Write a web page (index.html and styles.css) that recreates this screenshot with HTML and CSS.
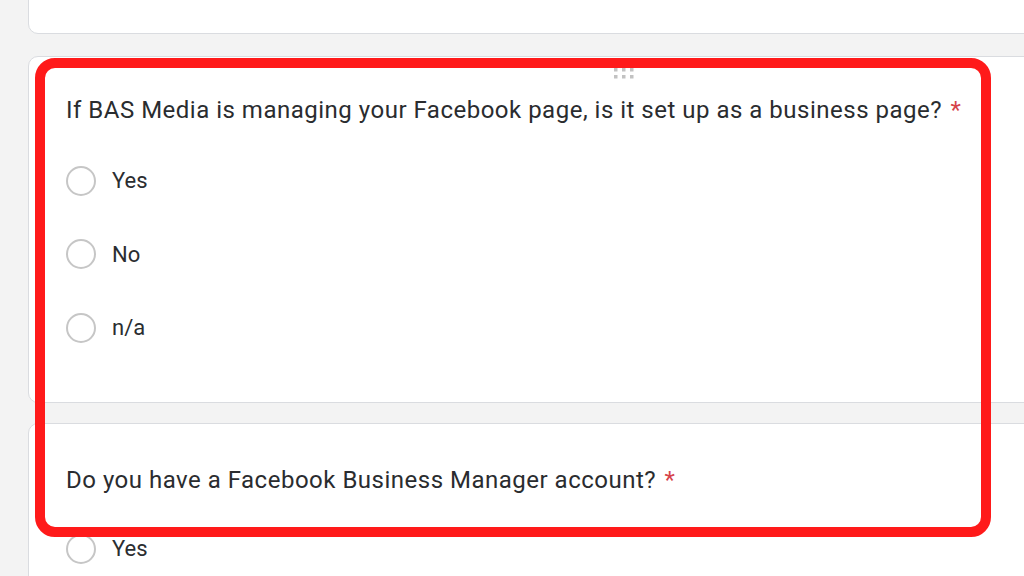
FILE: index.html
```html
<!DOCTYPE html>
<html>
<head>
<meta charset="utf-8">
<link rel="stylesheet" href="styles.css">
</head>
<body>
<div class="page">
  <div class="card card-top"></div>
  <div class="card card-q">
    <div class="drag">
      <svg width="24" height="12" viewBox="0 0 24 12"><g fill="#c2c2c2"><rect x="1" y="1" width="3.5" height="3.5"/><rect x="9" y="1" width="3.5" height="3.5"/><rect x="17" y="1" width="3.5" height="3.5"/><rect x="1" y="8" width="3.5" height="3.5"/><rect x="9" y="8" width="3.5" height="3.5"/><rect x="17" y="8" width="3.5" height="3.5"/></g></svg>
    </div>
    <div class="question">If BAS Media is managing your Facebook page, is it set up as a business page? <span class="req">*</span></div>
    <div class="options">
      <div class="option"><span class="radio"></span><span class="label">Yes</span></div>
      <div class="option"><span class="radio"></span><span class="label">No</span></div>
      <div class="option"><span class="radio"></span><span class="label">n/a</span></div>
    </div>
  </div>
  <div class="card card-q2">
    <div class="question">Do you have a Facebook Business Manager account? <span class="req">*</span></div>
    <div class="options">
      <div class="option"><span class="radio"></span><span class="label">Yes</span></div>
    </div>
  </div>
</div>
<div class="highlight"></div>
</body>
</html>
```
FILE: styles.css
```css
html, body {
  margin: 0;
  padding: 0;
  height: 100%;
  overflow: hidden;
}
body {
  background: #f3f3f3;
  font-family: Roboto, "Liberation Sans", Arial, sans-serif;
  color: #202124;
  position: relative;
}
.page {
  display: flex;
  flex-direction: column;
  margin-top: -100px;
  padding-left: 28px;
  width: 1200px;
}
.card {
  background: #fff;
  border: 1px solid #dadce0;
  border-radius: 10px;
  box-sizing: border-box;
  flex: none;
}
.card-top {
  height: 134px;
}
.card-q {
  margin-top: 22px;
  height: 347px;
  padding: 0 0 0 37px;
  display: flex;
  flex-direction: column;
}
.drag {
  padding: 10px 0 0 547px;
  height: 37px;
  box-sizing: border-box;
}
.drag svg {
  display: block;
}
.question {
  font-size: 24px;
  line-height: 32px;
  letter-spacing: 0.5px;
  color: #2a2c2f;
}
.req {
  color: #d6434a;
  margin-left: 2px;
}
.options {
  display: flex;
  flex-direction: column;
  margin-top: 18px;
}
.option {
  display: flex;
  align-items: center;
  height: 73.5px;
  gap: 16px;
}
.radio {
  width: 26px;
  height: 26px;
  border: 2px solid #c6c6c6;
  border-radius: 50%;
  flex: none;
}
.label {
  font-size: 22px;
  color: #2b2d30;
}
.card-q2 {
  margin-top: 20px;
  height: 200px;
  padding: 40px 0 0 37px;
}
.card-q2 .options {
  margin-top: 16px;
}
.highlight {
  position: absolute;
  left: 35px;
  top: 58px;
  width: 956px;
  height: 479px;
  box-sizing: border-box;
  border: 10px solid #ff1a1a;
  border-radius: 20px;
}
```
